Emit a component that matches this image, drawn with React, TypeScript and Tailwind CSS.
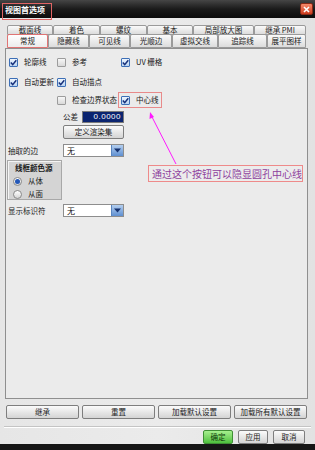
import React from "react";

const font = "font-['Noto_Sans_CJK_SC','Liberation_Sans',sans-serif]";

const Check = ({ checked }: { checked?: boolean }) =>
  checked ? (
    <span className="flex h-[9px] w-[9px] shrink-0 items-center justify-center rounded-[1px] border border-[#3d6fb6] bg-gradient-to-b from-[#eef5fd] to-[#b9d3f1]">
      <svg width="7" height="7" viewBox="0 0 7 7">
        <path d="M0.8 3.6 L2.7 5.6 L6.3 1.2" fill="none" stroke="#17307a" strokeWidth="1.5" />
      </svg>
    </span>
  ) : (
    <span className="block h-[9px] w-[9px] shrink-0 rounded-[1px] border border-[#9c9c9c] bg-gradient-to-b from-[#f7f7f7] to-[#d9d9d9]" />
  );

const CheckItem = ({ checked, label, w }: { checked?: boolean; label: string; w: string }) => (
  <div className={`flex shrink-0 items-center gap-[6px] ${w}`}>
    <Check checked={checked} />
    <span className="whitespace-nowrap text-[7.5px] leading-none text-[#1a1a1a]">{label}</span>
  </div>
);

const Radio = ({ on, label }: { on?: boolean; label: string }) => (
  <div className="flex h-[9px] items-center gap-[6px]">
    <span className="flex h-[9px] w-[9px] items-center justify-center rounded-full border border-[#8a8a8a] bg-gradient-to-b from-[#ffffff] to-[#d6d6d6]">
      {on && <span className="block h-[5px] w-[5px] rounded-full bg-[#2458b8]" />}
    </span>
    <span className="whitespace-nowrap text-[7.5px] leading-none text-[#1a1a1a]">{label}</span>
  </div>
);

const Select = ({ value }: { value: string }) => (
  <div className="flex h-[13px] w-[61px] items-stretch border border-[#8d8d8d] bg-white">
    <span className="flex-1 pl-[3px] text-[8px] leading-[11px] text-[#111]">{value}</span>
    <span className="flex w-[12px] flex-col items-center justify-center border-l border-[#5a86c0] bg-gradient-to-b from-[#b4cff0] to-[#5f8fd0]">
      <svg width="7" height="5" viewBox="0 0 7 5">
        <path d="M0 0.5 H7 L3.5 4.5 Z" fill="#15316e" />
      </svg>
    </span>
  </div>
);

const Tab = ({ label, w, selected, h }: { label: string; w: string; selected?: boolean; h: string }) => (
  <div
    className={`flex ${w} ${h} items-center justify-center whitespace-nowrap rounded-t-[2px] border text-[7.5px] leading-none text-[#1a1a1a] ${
      selected
        ? "border-[#e07474] bg-gradient-to-b from-[#ffffff] to-[#ececec]"
        : "border-[#9a9a9a] bg-gradient-to-b from-[#fafafa] to-[#dcdcdc]"
    }`}
  >
    {label}
  </div>
);

const Btn = ({ label, w, green }: { label: string; w: string; green?: boolean }) => (
  <div
    className={`flex h-[14px] ${w} items-center justify-center whitespace-nowrap rounded-[2px] border text-[7.5px] leading-none ${
      green
        ? "border-[#3f8f35] bg-gradient-to-b from-[#a6f08e] to-[#4cc03c] text-[#0f3a0a]"
        : "border-[#7e7e7e] bg-gradient-to-b from-[#fbfbfb] to-[#d4d4d4] text-[#1a1a1a]"
    }`}
  >
    {label}
  </div>
);

export default function App() {
  const row1 = [
    ["截面线", "w-[46px]"],
    ["着色", "w-[47px]"],
    ["螺纹", "w-[47px]"],
    ["基本", "w-[46px]"],
    ["局部放大图", "w-[61px]"],
    ["继承 PMI", "w-[52px]"],
  ];
  const row2 = [
    ["常规", "w-[41px]"],
    ["隐藏线", "w-[41px]"],
    ["可见线", "w-[41px]"],
    ["光顺边", "w-[42px]"],
    ["虚拟交线", "w-[46px]"],
    ["追踪线", "w-[49px]"],
    ["展平图样", "w-[39px]"],
  ];

  return (
    <div className={`relative flex h-[450px] w-[315px] flex-col overflow-hidden bg-gradient-to-r from-[#e6e6e6] via-[#ebebeb] to-[#e2e2e2] ${font}`}>
      {/* title bar */}
      <div className="relative flex h-[18px] shrink-0 items-start justify-between bg-gradient-to-b from-[#464646] via-[#1b1b1b] to-[#0c0c0c]">
        <span className="ml-[2px] mt-[3px] flex h-[17px] w-[50px] items-start whitespace-nowrap border border-[#e06464] pl-[2px] pt-[2px] text-[8px] font-bold leading-none text-white">
          视图首选项
        </span>
        <span className="mr-[2px] mt-[3px] flex h-[12px] w-[13px] items-center justify-center rounded-[2px] border border-[#8a2a16] bg-gradient-to-b from-[#f6896a] to-[#cc3a1c]">
          <svg width="7" height="7" viewBox="0 0 7 7">
            <path d="M1 1 L6 6 M6 1 L1 6" stroke="white" strokeWidth="1.6" />
          </svg>
        </span>
      </div>

      {/* tabs */}
      <div className="ml-[7px] mt-[7px] flex">
        {row1.map(([l, w]) => (
          <Tab key={l} label={l} w={w} h="h-[10px]" />
        ))}
      </div>
      <div className="ml-[7px] -mt-[1px] flex">
        {row2.map(([l, w], i) => (
          <Tab key={l} label={l} w={w} h="h-[14px]" selected={i === 0} />
        ))}
      </div>

      {/* panel */}
      <div className="ml-[5px] h-[351px] w-[303px] shrink-0 border border-[#8f8f8f] bg-[#ebebeb] pl-[3px]">
        <div className="mt-[8px] flex h-[10px] items-center">
          <CheckItem checked label="轮廓线" w="w-[48px]" />
          <CheckItem label="参考" w="w-[64px]" />
          <CheckItem checked label="UV 栅格" w="w-[60px]" />
        </div>
        <div className="mt-[10px] flex h-[10px] items-center">
          <CheckItem checked label="自动更新" w="w-[48px]" />
          <CheckItem checked label="自动描点" w="w-[64px]" />
        </div>
        <div className="mt-[5px] flex h-[16px] items-center">
          <div className="w-[48px] shrink-0" />
          <CheckItem label="检查边界状态" w="w-[61px]" />
          <div className="flex h-[16px] w-[44px] shrink-0 items-center border border-[#e88a8a] pl-[2px]">
            <CheckItem checked label="中心线" w="w-[40px]" />
          </div>
        </div>
        <div className="mt-[3px] flex h-[12px] items-center">
          <span className="ml-[54px] w-[19px] whitespace-nowrap text-[7.5px] leading-none text-[#1a1a1a]">公差</span>
          <span className="flex h-[12px] w-[42px] items-center justify-end border border-[#7a7a7a] bg-[#0b2470] pr-[2px] font-['Liberation_Sans',sans-serif] text-[8px] tracking-[0.5px] text-white">
            0.0000
          </span>
        </div>
        <div className="ml-[54px] mt-[2px]">
          <Btn label="定义渲染集" w="w-[61px]" />
        </div>
        <div className="mt-[5px] flex items-center">
          <span className="-ml-[1px] w-[55px] whitespace-nowrap text-[7.5px] leading-none text-[#1a1a1a]">抽取的边</span>
          <Select value="无" />
        </div>
        <div className="-ml-[2px] mt-[3px] flex h-[40px] w-[55px] flex-col border border-[#a8a8a8] bg-[#d4d4d4] pl-[5px] shadow-[inset_1px_1px_0_#f4f4f4]">
          <span className="mt-[3px] whitespace-nowrap pl-[2px] text-[7.5px] font-bold leading-none text-[#1a1a1a]">线框颜色源</span>
          <div className="mt-[5px]">
            <Radio on label="从体" />
          </div>
          <div className="mt-[4px]">
            <Radio label="从面" />
          </div>
        </div>
        <div className="mt-[4px] flex items-center">
          <span className="-ml-[1px] w-[55px] whitespace-nowrap text-[7.5px] leading-none text-[#1a1a1a]">显示标识符</span>
          <Select value="无" />
        </div>
      </div>

      {/* bottom buttons */}
      <div className="ml-[6px] mt-[6px] flex gap-[3px]">
        <Btn label="继承" w="w-[73px]" />
        <Btn label="重置" w="w-[73px]" />
        <Btn label="加载默认设置" w="w-[73px]" />
        <Btn label="加载所有默认设置" w="w-[73px]" />
      </div>
      <div className="mx-[4px] mt-[7px] border-b border-t border-b-white border-t-[#c4c4c4]" />
      <div className="mr-[10px] mt-[2px] flex justify-end gap-[5px]">
        <Btn label="确定" w="w-[30px]" green />
        <Btn label="应用" w="w-[30px]" />
        <Btn label="取消" w="w-[32px]" />
      </div>
      <div className="mt-auto h-[6px] bg-[#161616]" />

      {/* annotation */}
      <svg className="pointer-events-none absolute left-0 top-0" width="315" height="450">
        <line x1="151" y1="115" x2="176" y2="164" stroke="#ff1aff" strokeWidth="1" />
        <path d="M150 112 L149.5 119 L154 117 Z" fill="#ff1aff" />
      </svg>
      <div className="absolute left-[148px] top-[165px] flex h-[17px] w-[155px] items-center whitespace-nowrap border border-[#ee8a8a] bg-[#ececec] pl-[3px] text-[10px] leading-none text-[#8e3f9c]">
        通过这个按钮可以隐显圆孔中心线
      </div>
    </div>
  );
}
